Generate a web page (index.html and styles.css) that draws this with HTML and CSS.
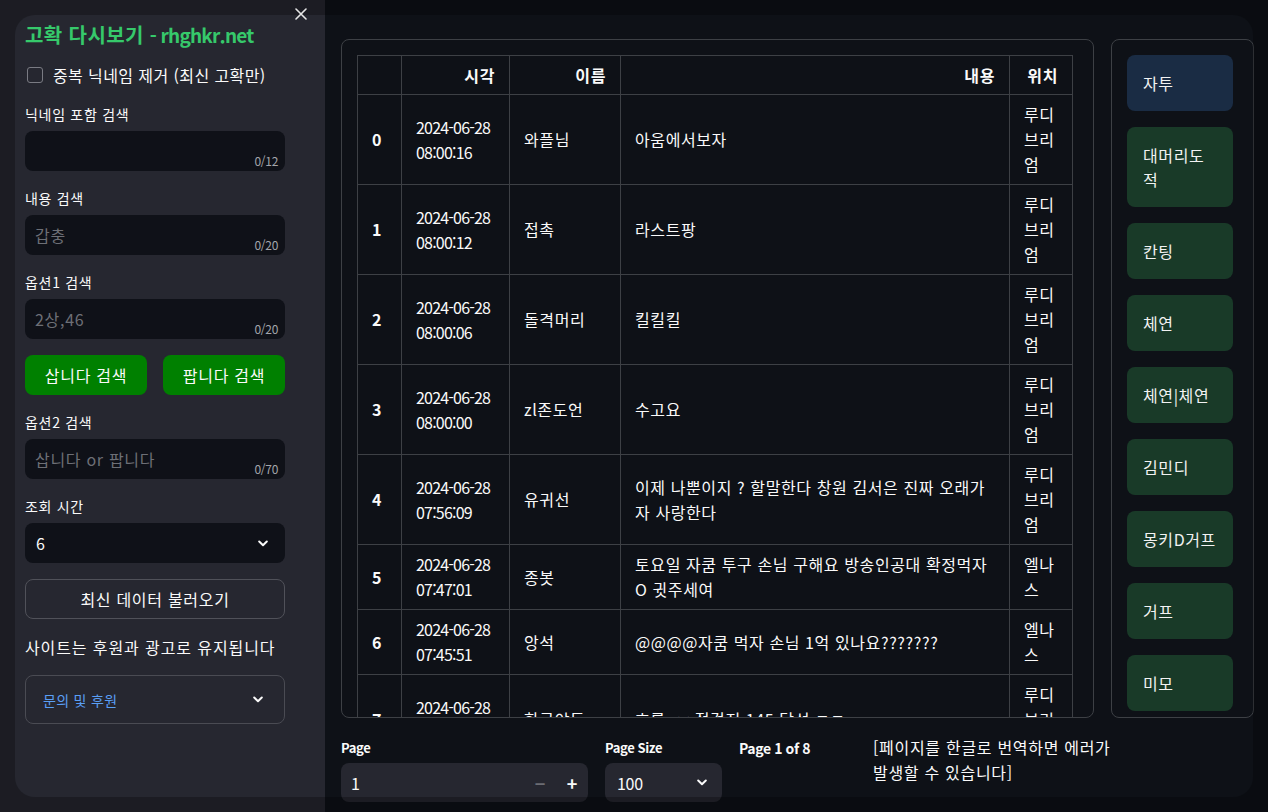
FILE: index.html
```html
<!DOCTYPE html>
<html lang="ko">
<head>
<meta charset="utf-8">
<title>고확 다시보기</title>
<link rel="stylesheet" href="styles.css">
</head>
<body>
<div class="app">
  <aside class="sidebar">
    <button class="close" aria-label="close">
      <svg width="12" height="12" viewBox="0 0 12 12"><path d="M1 1L11 11M11 1L1 11" stroke="#e6e6e6" stroke-width="1.6" stroke-linecap="round"/></svg>
    </button>
    <div class="sb-content">
      <h1 class="title">고확 다시보기 <span class="title-latin">- rhghkr.net</span></h1>
      <label class="check-row"><span class="checkbox"></span><span>중복 닉네임 제거 (최신 고확만)</span></label>

      <div class="field">
        <div class="label">닉네임 포함 검색</div>
        <div class="input"><span class="ph"></span><span class="count">0/12</span></div>
      </div>
      <div class="field">
        <div class="label">내용 검색</div>
        <div class="input"><span class="ph">갑충</span><span class="count">0/20</span></div>
      </div>
      <div class="field">
        <div class="label">옵션1 검색</div>
        <div class="input"><span class="ph">2상,46</span><span class="count">0/20</span></div>
      </div>
      <div class="btn-pair">
        <button class="green-btn">삽니다 검색</button>
        <button class="green-btn">팝니다 검색</button>
      </div>
      <div class="field">
        <div class="label">옵션2 검색</div>
        <div class="input"><span class="ph">삽니다 or 팝니다</span><span class="count">0/70</span></div>
      </div>
      <div class="field">
        <div class="label">조회 시간</div>
        <div class="select"><span>6</span>
          <svg class="chev" width="10" height="7" viewBox="0 0 10 7"><path d="M1.2 1.5L5 5.2L8.8 1.5" fill="none" stroke="#fafafa" stroke-width="2" stroke-linecap="round" stroke-linejoin="round"/></svg>
        </div>
      </div>
      <button class="outline-btn">최신 데이터 불러오기</button>
      <p class="notice">사이트는 후원과 광고로 유지됩니다</p>
      <div class="expander"><span>문의 및 후원</span>
        <svg class="chev" width="10" height="7" viewBox="0 0 10 7"><path d="M1.2 1.5L5 5.2L8.8 1.5" fill="none" stroke="#fafafa" stroke-width="2" stroke-linecap="round" stroke-linejoin="round"/></svg>
      </div>
    </div>
  </aside>

  <main class="main">
    <div class="top-row">
      <div class="table-box">
        <table>
          <colgroup><col class="c0"><col class="c1"><col class="c2"><col class="c3"><col class="c4"></colgroup>
          <thead>
            <tr><th></th><th>시각</th><th>이름</th><th>내용</th><th>위치</th></tr>
          </thead>
          <tbody>
            <tr><td class="idx">0</td><td class="dt">2024-06-28 08:00:16</td><td>와플님</td><td>아움에서보자</td><td>루디브리엄</td></tr>
            <tr><td class="idx">1</td><td class="dt">2024-06-28 08:00:12</td><td>접촉</td><td>라스트팡</td><td>루디브리엄</td></tr>
            <tr><td class="idx">2</td><td class="dt">2024-06-28 08:00:06</td><td>돌격머리</td><td>킬킬킬</td><td>루디브리엄</td></tr>
            <tr><td class="idx">3</td><td class="dt">2024-06-28 08:00:00</td><td>zl존도언</td><td>수고요</td><td>루디브리엄</td></tr>
            <tr><td class="idx">4</td><td class="dt">2024-06-28 07:56:09</td><td>유귀선</td><td>이제 나뿐이지 ? 할말한다 창원 김서은 진짜 오래가자 사랑한다</td><td>루디브리엄</td></tr>
            <tr><td class="idx">5</td><td class="dt">2024-06-28 07:47:01</td><td>종봇</td><td>토요일 자쿰 투구 손님 구해요 방송인공대 확정먹자 O 귓주세여</td><td>엘나스</td></tr>
            <tr><td class="idx">6</td><td class="dt">2024-06-28 07:45:51</td><td>앙석</td><td>@@@@자쿰 먹자 손님 1억 있나요???????</td><td>엘나스</td></tr>
            <tr><td class="idx">7</td><td class="dt">2024-06-28 07:44:30</td><td>한국야동</td><td>호룡 &lt;&lt; 점검전 145 달성 ㄷㄷ</td><td>루디브리엄</td></tr>
          </tbody>
        </table>
      </div>
      <div class="btn-panel">
        <button class="loc-btn active">자투</button>
        <button class="loc-btn">대머리도<br>적</button>
        <button class="loc-btn">칸팅</button>
        <button class="loc-btn">체연</button>
        <button class="loc-btn">체연|체연</button>
        <button class="loc-btn">김민디</button>
        <button class="loc-btn">몽키D거프</button>
        <button class="loc-btn">거프</button>
        <button class="loc-btn">미모</button>
      </div>
    </div>

    <div class="pager">
      <div class="pcol w-page">
        <div class="plabel">Page</div>
        <div class="num-input">
          <span class="num-val">1</span>
          <span class="step minus">−</span>
          <span class="step plus">+</span>
        </div>
      </div>
      <div class="pcol w-size">
        <div class="plabel">Page Size</div>
        <div class="size-select"><span>100</span>
          <svg class="chev" width="10" height="7" viewBox="0 0 10 7"><path d="M1.2 1.5L5 5.2L8.8 1.5" fill="none" stroke="#fafafa" stroke-width="2" stroke-linecap="round" stroke-linejoin="round"/></svg>
        </div>
      </div>
      <div class="pcol w-info">
        <div class="pinfo">Page <b>1</b> of <b>8</b></div>
      </div>
      <div class="pcol w-note">
        <p class="pnote">[페이지를 한글로 번역하면 에러가 발생할 수 있습니다]</p>
      </div>
    </div>
  </main>
</div>
<div class="frame"></div>
</body>
</html>
```

FILE: styles.css
```css
html, body {
  margin: 0;
  padding: 0;
  height: 100%;
}
body {
  background: #0e1117;
  color: #fafafa;
  font-family: "Noto Sans CJK KR", "Noto Sans", sans-serif;
  overflow: hidden;
}
button {
  font-family: inherit;
  color: inherit;
  border: none;
  background: none;
  margin: 0;
  cursor: pointer;
  letter-spacing: inherit;
}
.app {
  display: flex;
  height: 812px;
}

/* ---------- sidebar ---------- */
.sidebar {
  width: 325px;
  flex: none;
  background: #262730;
  position: relative;
  letter-spacing: 0.7px;
}
.close {
  position: absolute;
  left: 295px;
  top: 8px;
  width: 12px;
  height: 12px;
  padding: 0;
  z-index: 10;
  display: flex;
}
.sb-content {
  padding: 23px 40px 0 25px;
  display: flex;
  flex-direction: column;
  gap: 16px;
}
.title {
  margin: 0;
  font-size: 20px;
  line-height: 24px;
  font-weight: 700;
  color: #36c96b;
  white-space: nowrap;
  letter-spacing: 0.4px;
}
.title-latin {
  font-size: 19px;
  letter-spacing: -0.8px;
}
.check-row {
  display: flex;
  align-items: center;
  height: 24px;
  gap: 10px;
  font-size: 16px;
  letter-spacing: 0.4px;
}
.checkbox {
  width: 14px;
  height: 14px;
  margin-left: 2px;
  border: 1px solid #7a7b83;
  border-radius: 3px;
  flex: none;
}
.field {
  display: flex;
  flex-direction: column;
  gap: 6px;
}
.label {
  font-size: 14px;
  line-height: 22px;
}
.input {
  height: 40px;
  background: #0f1118;
  border-radius: 8px;
  display: flex;
  padding: 0 7px 0 10px;
  box-sizing: border-box;
}
.ph {
  flex: 1;
  align-self: center;
  font-size: 16px;
  color: #6d6f76;
}
.count {
  align-self: flex-end;
  font-size: 12px;
  line-height: 14px;
  margin-bottom: 3px;
  color: #a3a5ab;
  letter-spacing: -0.3px;
}
.btn-pair {
  display: grid;
  grid-template-columns: 1fr 1fr;
  gap: 16px;
}
.green-btn {
  height: 40px;
  background: #008000;
  border-radius: 8px;
  font-size: 16px;
  color: #fafafa;
}
.select {
  height: 40px;
  background: #0f1118;
  border-radius: 8px;
  display: flex;
  align-items: center;
  justify-content: space-between;
  padding: 0 17px 0 11px;
  font-size: 16px;
}
.chev {
  display: block;
  flex: none;
}
.outline-btn {
  height: 40px;
  border: 1px solid #505159;
  border-radius: 8px;
  font-size: 16px;
}
.notice {
  margin: 0;
  font-size: 16px;
  line-height: 24px;
  white-space: nowrap;
  letter-spacing: 0.9px;
}
.expander {
  height: 49px;
  box-sizing: border-box;
  border: 1px solid #4a4b53;
  border-radius: 8px;
  display: flex;
  align-items: center;
  justify-content: space-between;
  padding: 0 21px 0 17px;
  font-size: 14px;
  color: #5a9ff5;
  letter-spacing: 0.3px;
}

/* ---------- main ---------- */
.main {
  flex: 1;
  padding: 39px 14px 0 16px;
  display: flex;
  flex-direction: column;
}
.top-row {
  display: flex;
  gap: 17px;
  height: 679px;
  flex: none;
}
.table-box {
  width: 753px;
  box-sizing: border-box;
  border: 1px solid #3d4045;
  border-radius: 8px;
  padding: 15px;
  overflow: hidden;
}
table {
  border-collapse: collapse;
  table-layout: fixed;
  width: 716px;
  letter-spacing: 0.6px;
}
col.c0 { width: 44px; }
col.c1 { width: 108px; }
col.c2 { width: 111px; }
col.c3 { width: 389px; }
col.c4 { width: 63px; }
th, td {
  border: 1px solid #3d4045;
  padding: 7px 14px;
  font-size: 16px;
  line-height: 25px;
  vertical-align: middle;
  text-align: left;
  color: #fafafa;
}
th {
  font-weight: 700;
  text-align: right;
  padding: 7px 14px 6px;
}
td.idx {
  font-weight: 700;
}
td.dt {
  letter-spacing: -0.8px;
}
.btn-panel {
  width: 143px;
  box-sizing: border-box;
  border: 1px solid #3d4045;
  border-radius: 8px;
  padding: 15px;
  display: flex;
  flex-direction: column;
  align-items: flex-start;
  gap: 16px;
}
.loc-btn {
  width: 106px;
  box-sizing: border-box;
  padding: 16px 6px 16px 16px;
  text-align: left;
  font-size: 16px;
  line-height: 24px;
  border-radius: 8px;
  background: #193a28;
  color: #f2f2f2;
  letter-spacing: 0.6px;
  white-space: nowrap;
}
.loc-btn.active {
  background: #1a2c44;
}

/* ---------- pager ---------- */
.pager {
  display: flex;
  gap: 17px;
  margin-top: 20px;
}
.pcol { flex: none; }
.w-page { width: 247px; }
.w-size { width: 117px; }
.w-info { width: 117px; }
.w-note { width: 247px; }
.plabel {
  font-size: 13px;
  line-height: 20px;
  font-weight: 600;
  margin-bottom: 5px;
  letter-spacing: -0.4px;
}
.num-input {
  height: 39px;
  background: #262730;
  border-radius: 8px;
  display: flex;
  align-items: center;
  padding-left: 10px;
  font-size: 16px;
}
.num-val { flex: 1; }
.step {
  width: 32px;
  text-align: center;
  font-size: 18px;
  font-weight: 600;
}
.step.minus { color: #6b6c73; }
.size-select {
  height: 39px;
  background: #262730;
  border-radius: 8px;
  display: flex;
  align-items: center;
  justify-content: space-between;
  padding: 0 15px 0 12px;
  font-size: 16px;
  letter-spacing: -0.3px;
}
.pinfo {
  font-size: 14px;
  line-height: 20px;
  font-weight: 600;
  white-space: nowrap;
  letter-spacing: -0.4px;
}
.pinfo b { font-weight: 700; }
.pnote {
  margin: -3px 0 0 0;
  font-size: 16px;
  line-height: 25px;
  word-break: keep-all;
  letter-spacing: 0.7px;
}

/* window frame overlay */
.frame {
  position: fixed;
  left: 15px;
  top: 15px;
  right: 15px;
  bottom: 15px;
  border-radius: 20px;
  box-shadow: 0 0 0 80px rgba(0, 0, 0, 0.26);
  pointer-events: none;
  z-index: 5;
}
```
